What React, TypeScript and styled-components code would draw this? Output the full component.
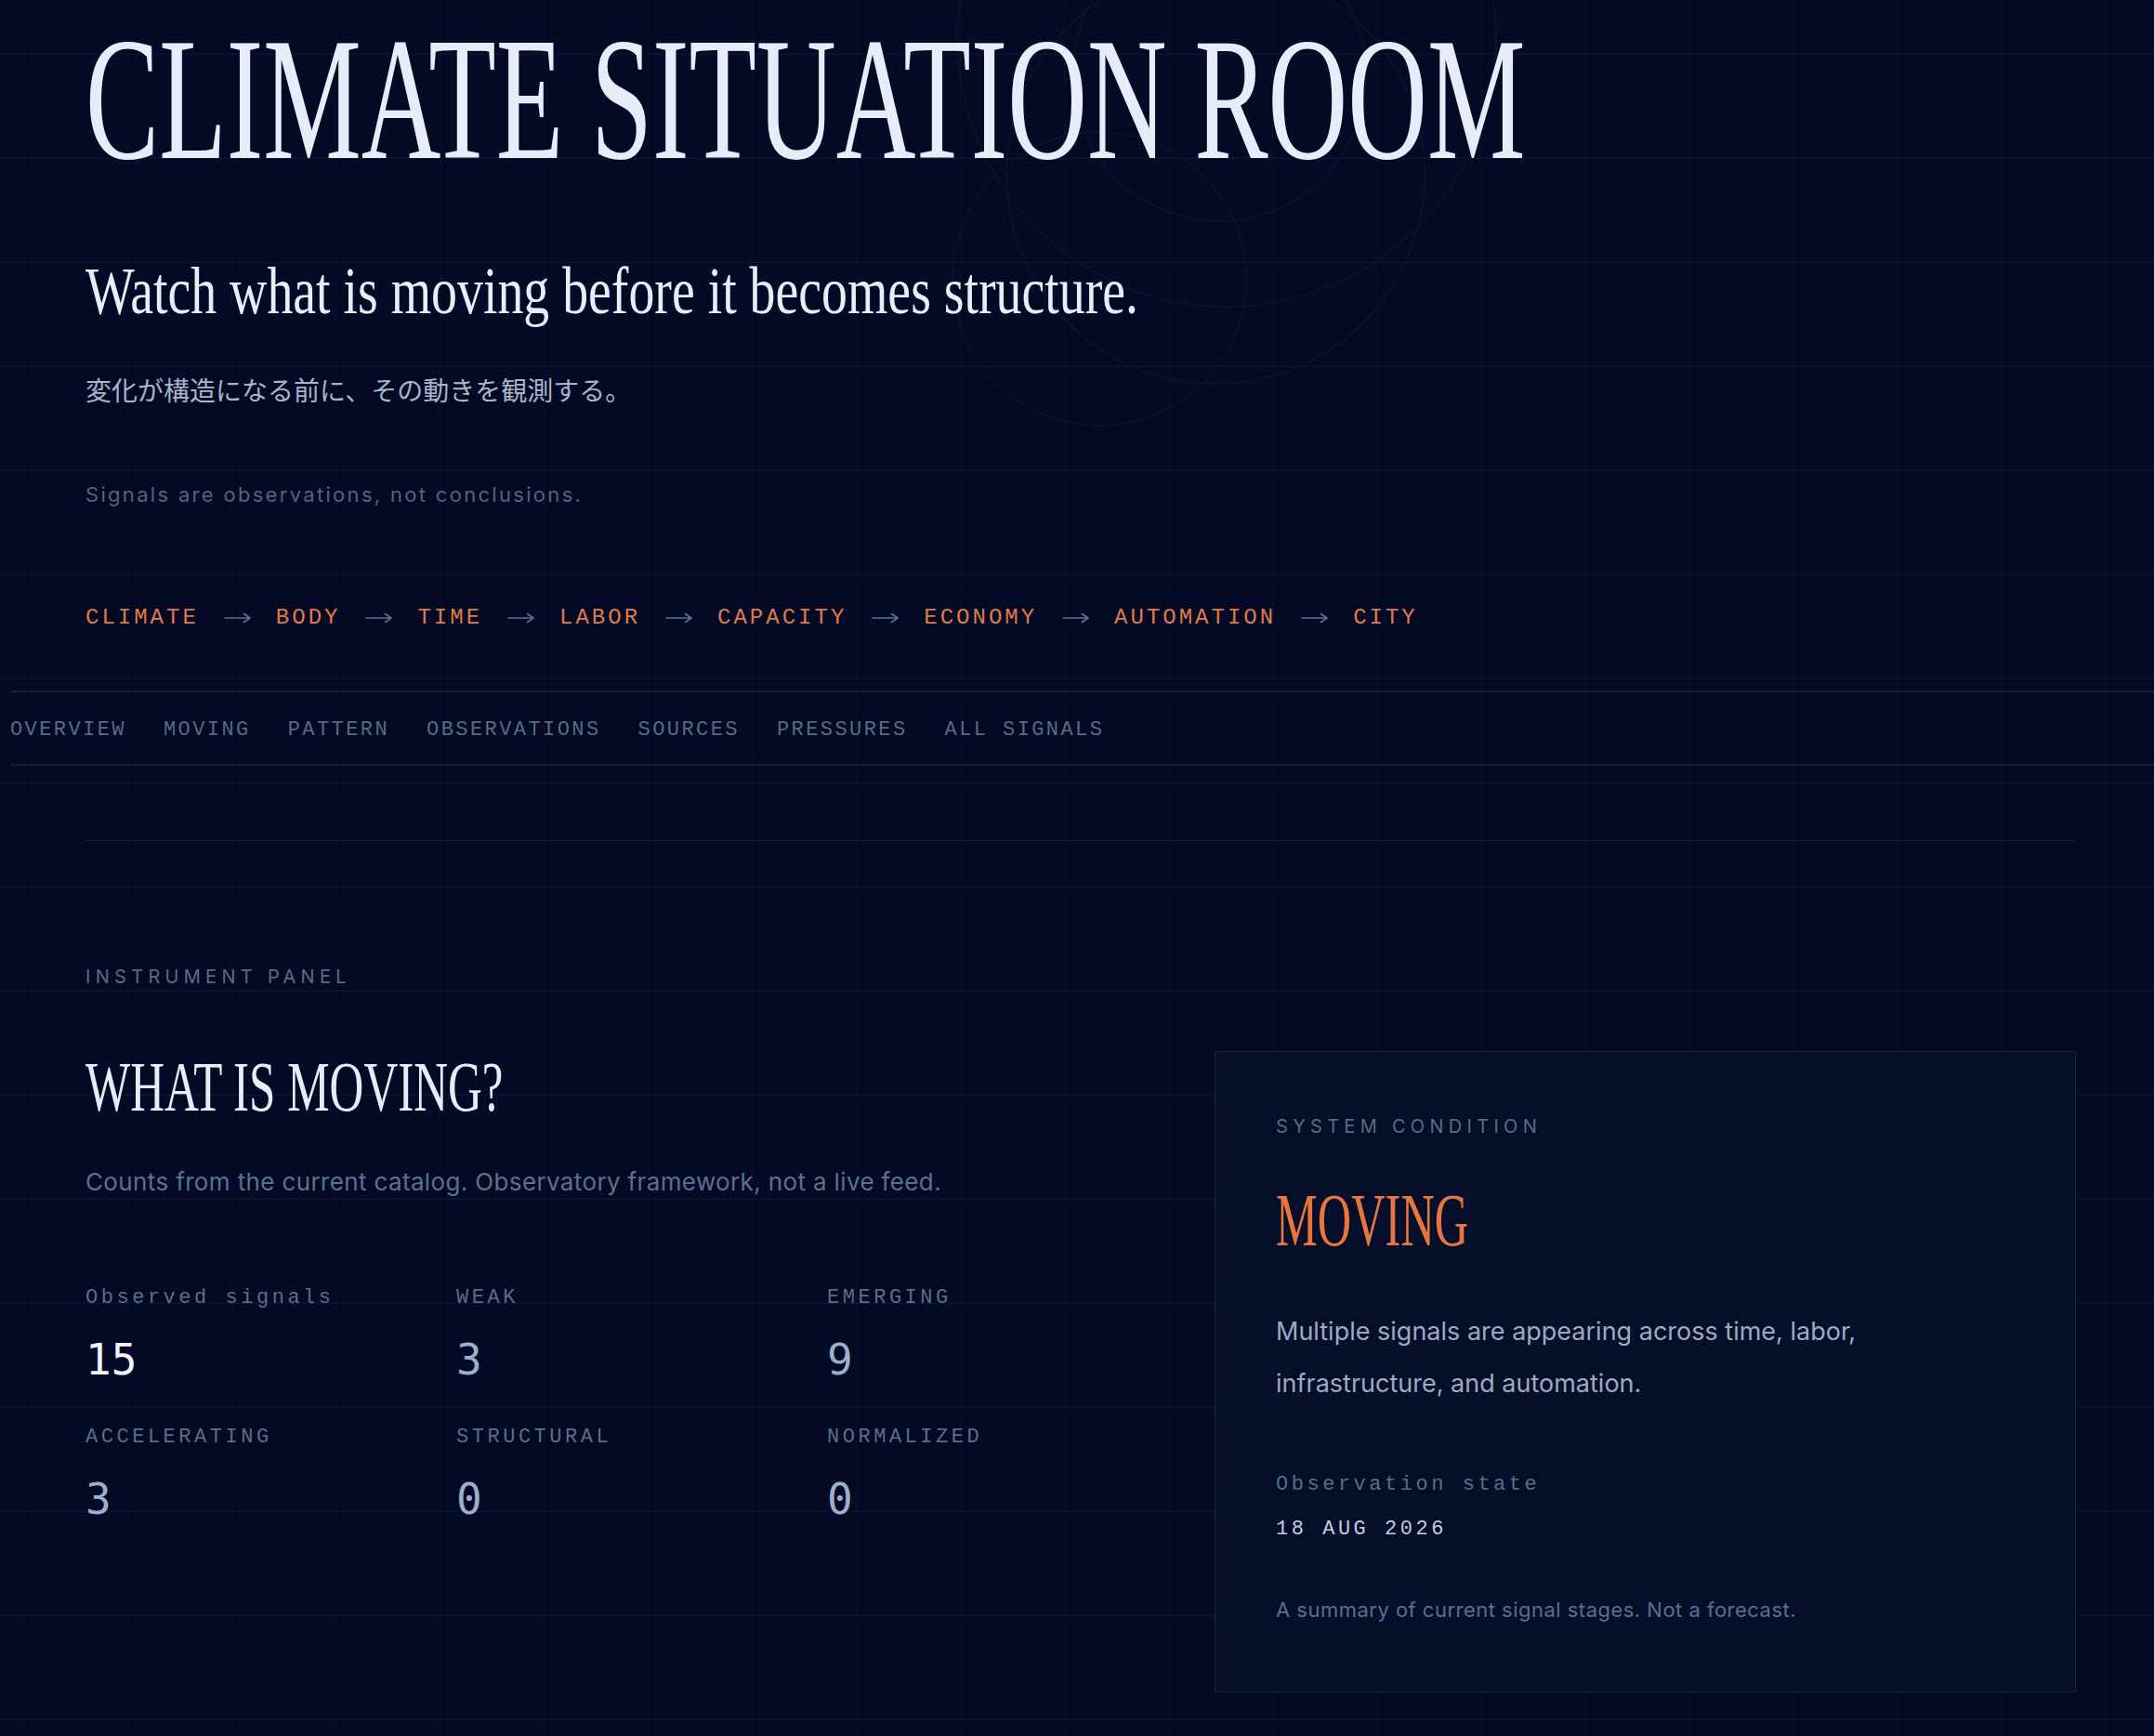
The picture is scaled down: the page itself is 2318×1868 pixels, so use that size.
import React from "react";
import styled, { createGlobalStyle } from "styled-components";

const GlobalStyle = createGlobalStyle`
  html, body {
    margin: 0;
    padding: 0;
    background: #040a25;
    overflow-x: hidden;
  }
  * { box-sizing: border-box; }
`;

const SERIF = `"Liberation Serif", "Times New Roman", serif`;
const SANS = `Inter, "Noto Sans", "Noto Sans CJK JP", sans-serif`;
const MONO = `"Liberation Mono", "DejaVu Sans Mono", monospace`;
const FIGURES = `"DejaVu Sans Mono", "Liberation Mono", monospace`;

const Page = styled.div`
  position: relative;
  min-height: 100vh;
  padding: 12px 84px 40px 92px;
  background-color: #040a25;
  background-image:
    linear-gradient(to bottom, rgba(40, 78, 116, 0.2) 1px, transparent 1px),
    linear-gradient(to right, rgba(40, 74, 112, 0.12) 1px, transparent 1px);
  background-size: 112px 112px;
  background-position: 25px 58px;
  overflow: hidden;
`;

const Orbits = styled.svg`
  position: absolute;
  left: 0;
  top: 0;
  width: 2318px;
  height: 620px;
  pointer-events: none;
  z-index: 0;
`;

const Content = styled.main`
  position: relative;
  z-index: 1;
`;

const Hero = styled.header`
  display: flex;
  flex-direction: column;
  align-items: flex-start;
`;

const Condensed = styled.h1<{ $scale: number }>`
  margin: 0;
  display: inline-block;
  white-space: nowrap;
  font-family: ${SERIF};
  font-weight: 400;
  transform: scaleX(${(p) => p.$scale});
  transform-origin: left center;
`;

const DisplayTitle = styled(Condensed)`
  font-size: 189px;
  line-height: 189px;
  color: #e7ecf8;
`;

const Lede = styled(Condensed).attrs({ as: "p" })`
  margin-top: 70px;
  font-size: 71px;
  line-height: 85px;
  color: #e9edf8;
`;

const Translation = styled.p`
  margin: 45px 0 0;
  font-family: ${SANS};
  font-size: 28px;
  line-height: 40px;
  color: #a8b4c8;
`;

const Caveat = styled.p`
  margin: 75px 0 0;
  font-family: ${SANS};
  font-size: 22px;
  line-height: 33px;
  letter-spacing: 0.105em;
  color: #4f657f;
`;

const Chain = styled.div`
  margin-top: 100px;
  display: flex;
  align-items: center;
  gap: 27px;
  height: 32px;
`;

const ChainStep = styled.span`
  font-family: ${MONO};
  font-size: 24px;
  line-height: 32px;
  letter-spacing: 0.125em;
  color: #e07a48;
`;

const ChainArrow = styled.svg`
  width: 29px;
  height: 12px;
  flex: none;
  color: #587390;
`;

const SectionNav = styled.nav`
  margin: 62px -84px 0 -81px;
  padding: 26px 0 21px;
  display: flex;
  gap: 40px;
  border-top: 2px solid #0f2238;
  border-bottom: 2px solid #0f2238;
`;

const NavLink = styled.a`
  font-family: ${MONO};
  font-size: 22px;
  line-height: 30px;
  letter-spacing: 0.11em;
  color: #566b86;
  text-decoration: none;
  white-space: nowrap;
`;

const Rule = styled.hr`
  margin: 80px 0 0;
  border: 0;
  height: 1px;
  background: #0f1f36;
`;

const Panel = styled.section`
  margin-top: 134px;
`;

const Eyebrow = styled.div`
  font-family: ${SANS};
  font-size: 20px;
  line-height: 24px;
  letter-spacing: 0.265em;
  text-transform: uppercase;
  color: #586c86;
`;

const PanelGrid = styled.div`
  margin-top: 68px;
  display: grid;
  grid-template-columns: minmax(0, 1fr) 927px;
  column-gap: 82px;
  align-items: start;
`;

const Readout = styled.div`
  display: flex;
  flex-direction: column;
  align-items: flex-start;
`;

const SectionTitle = styled(Condensed).attrs({ as: "h2" })`
  font-size: 76px;
  line-height: 76px;
  color: #e8ecf8;
`;

const PanelCaption = styled.p`
  margin: 47px 0 0;
  font-family: ${SANS};
  font-size: 26px;
  line-height: 36px;
  letter-spacing: 0.014em;
  color: #5a7290;
`;

const StatGrid = styled.div`
  margin-top: 93px;
  width: 100%;
  display: grid;
  grid-template-columns: repeat(3, minmax(0, 1fr));
  column-gap: 64px;
  row-gap: 42px;
`;

const Stat = styled.div`
  display: flex;
  flex-direction: column;
  gap: 24px;
`;

const MonoLabel = styled.div`
  font-family: ${MONO};
  font-size: 22px;
  line-height: 28px;
  letter-spacing: 0.16em;
  color: #5a6e88;
  white-space: nowrap;
`;

const StatValue = styled.div<{ $bright?: boolean }>`
  font-family: ${FIGURES};
  font-size: 46px;
  line-height: 56px;
  color: ${(p) => (p.$bright ? "#f3f6ff" : "#9cb0c9")};
`;

const ConditionCard = styled.aside`
  border: 1px solid #15283f;
  background: rgba(6, 16, 44, 0.85);
  padding: 68px 65px 72px;
  display: flex;
  flex-direction: column;
  align-items: flex-start;
`;

const ConditionWord = styled(Condensed).attrs({ as: "div" })`
  margin-top: 49px;
  font-size: 80px;
  line-height: 80px;
  color: #e8743f;
`;

const ConditionText = styled.p`
  margin: 52px 0 0;
  max-width: 720px;
  font-family: ${SANS};
  font-size: 27px;
  line-height: 56px;
  color: #9aabc4;
`;

const StateLabel = styled(MonoLabel)`
  margin-top: 67px;
`;

const StateDate = styled(MonoLabel)`
  margin-top: 20px;
  color: #c3cede;
`;

const Footnote = styled.p`
  margin: 56px 0 0;
  font-family: ${SANS};
  font-size: 22px;
  line-height: 32px;
  letter-spacing: 0.022em;
  color: #577090;
`;

const chain = ["CLIMATE", "BODY", "TIME", "LABOR", "CAPACITY", "ECONOMY", "AUTOMATION", "CITY"];
const sections = ["OVERVIEW", "MOVING", "PATTERN", "OBSERVATIONS", "SOURCES", "PRESSURES", "ALL SIGNALS"];
const stats: { label: string; value: number; bright?: boolean }[] = [
  { label: "Observed signals", value: 15, bright: true },
  { label: "WEAK", value: 3 },
  { label: "EMERGING", value: 9 },
  { label: "ACCELERATING", value: 3 },
  { label: "STRUCTURAL", value: 0 },
  { label: "NORMALIZED", value: 0 },
];

const orbits = [
  { cx: 1312, cy: 80, r: 158 },
  { cx: 1308, cy: 188, r: 225 },
  { cx: 1183, cy: 300, r: 158 },
  { cx: 1320, cy: 40, r: 290 },
];

function Arrow() {
  return (
    <ChainArrow viewBox="0 0 29 12" aria-hidden="true">
      <path d="M1 6H28M21.5 1.5L28 6L21.5 10.5" fill="none" stroke="currentColor" strokeWidth="1.6" strokeLinecap="round" strokeLinejoin="round" />
    </ChainArrow>
  );
}

export default function App() {
  return (
    <>
      <GlobalStyle />
      <Page>
        <Orbits viewBox="0 0 2318 620" aria-hidden="true">
          {orbits.map((o, i) => (
            <circle key={i} cx={o.cx} cy={o.cy} r={o.r} fill="none" stroke="rgba(120,150,190,0.07)" strokeWidth="1.5" />
          ))}
        </Orbits>
        <Content>
          <Hero>
            <DisplayTitle $scale={0.628}>CLIMATE SITUATION ROOM</DisplayTitle>
            <Lede $scale={0.786}>Watch what is moving before it becomes structure.</Lede>
            <Translation>変化が構造になる前に、その動きを観測する。</Translation>
            <Caveat>Signals are observations, not conclusions.</Caveat>
            <Chain>
              {chain.map((step, i) => (
                <React.Fragment key={step}>
                  {i > 0 && <Arrow />}
                  <ChainStep>{step}</ChainStep>
                </React.Fragment>
              ))}
            </Chain>
          </Hero>

          <SectionNav>
            {sections.map((s) => (
              <NavLink key={s} href={`#${s.toLowerCase().replace(" ", "-")}`}>
                {s}
              </NavLink>
            ))}
          </SectionNav>

          <Rule />

          <Panel>
            <Eyebrow>Instrument panel</Eyebrow>
            <PanelGrid>
              <Readout>
                <SectionTitle $scale={0.671}>WHAT IS MOVING?</SectionTitle>
                <PanelCaption>Counts from the current catalog. Observatory framework, not a live feed.</PanelCaption>
                <StatGrid>
                  {stats.map((s) => (
                    <Stat key={s.label}>
                      <MonoLabel>{s.label}</MonoLabel>
                      <StatValue $bright={s.bright}>{s.value}</StatValue>
                    </Stat>
                  ))}
                </StatGrid>
              </Readout>

              <ConditionCard>
                <Eyebrow>System condition</Eyebrow>
                <ConditionWord $scale={0.63}>MOVING</ConditionWord>
                <ConditionText>
                  Multiple signals are appearing across time, labor, infrastructure, and automation.
                </ConditionText>
                <StateLabel>Observation state</StateLabel>
                <StateDate>18 AUG 2026</StateDate>
                <Footnote>A summary of current signal stages. Not a forecast.</Footnote>
              </ConditionCard>
            </PanelGrid>
          </Panel>
        </Content>
      </Page>
    </>
  );
}
